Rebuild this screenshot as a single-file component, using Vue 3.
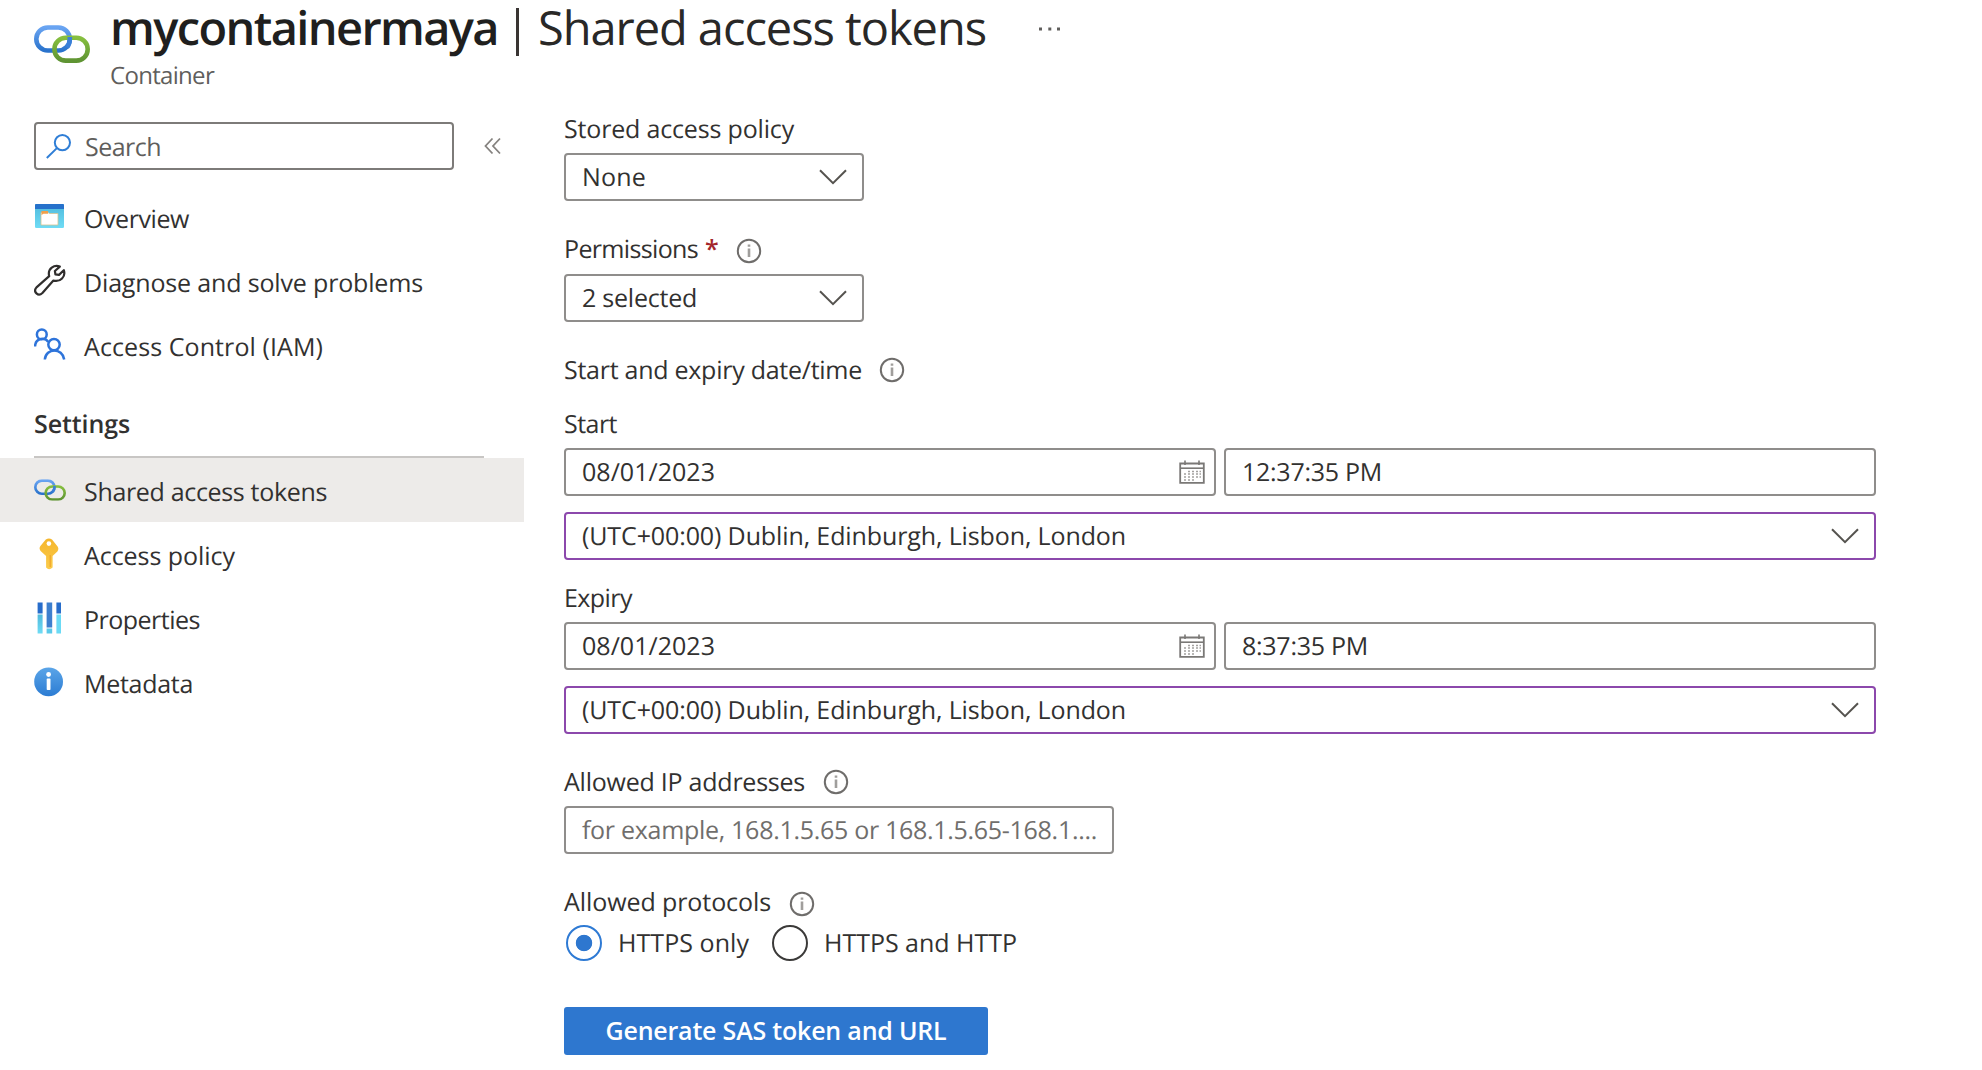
<script setup>
const navTop = [
  { icon: 'overview', label: 'Overview', width: 105 },
  { icon: 'wrench', label: 'Diagnose and solve problems', width: 339 },
  { icon: 'people', label: 'Access Control (IAM)', width: 239 },
]
const navSettings = [
  { icon: 'link', label: 'Shared access tokens', width: 243, active: true },
  { icon: 'key', label: 'Access policy', width: 151 },
  { icon: 'bars', label: 'Properties', width: 116 },
  { icon: 'info', label: 'Metadata', width: 109 },
]
const zone = '(UTC+00:00) Dublin, Edinburgh, Lisbon, London'
const periods = [
  { name: 'Start', width: 53, date: '08/01/2023', time: '12:37:35 PM', timeWidth: 140 },
  { name: 'Expiry', width: 68, date: '08/01/2023', time: '8:37:35 PM', timeWidth: 126 },
]

// Tracks a run of text so that it fills the given width in pixels.
const vFit = {
  mounted(el, { value }) {
    el.style.letterSpacing = '0'
    const natural = el.getBoundingClientRect().width
    el.style.letterSpacing = (value - natural) / el.textContent.length + 'px'
  },
}
</script>

<template>
  <div class="page">
    <svg width="0" height="0" class="defs">
      <defs>
        <linearGradient id="gBlue" x1="0" y1="0" x2="0" y2="1"><stop offset="0" stop-color="#69a4f2" /><stop offset="1" stop-color="#2a73cc" /></linearGradient>
        <linearGradient id="gGreen" x1="0" y1="0" x2="0" y2="1"><stop offset="0" stop-color="#86bf3f" /><stop offset="1" stop-color="#5f9433" /></linearGradient>
        <linearGradient id="gCyan" x1="0" y1="0" x2="0" y2="1"><stop offset="0" stop-color="#4fb9dc" /><stop offset="1" stop-color="#6fdcf5" /></linearGradient>
        <linearGradient id="gInfo" x1="0" y1="0" x2="0" y2="1"><stop offset="0" stop-color="#5ba5e8" /><stop offset="1" stop-color="#2c7cd3" /></linearGradient>
        <linearGradient id="gKey" x1="0" y1="0" x2="0" y2="1"><stop offset="0" stop-color="#f5b62c" /><stop offset="1" stop-color="#fbcb4b" /></linearGradient>
        <symbol id="chain" viewBox="0 0 56 38">
          <rect x="2.3" y="2.5" width="33.5" height="23" rx="11.5" fill="none" stroke="url(#gBlue)" stroke-width="4.6" />
          <rect x="20.4" y="12.8" width="33.3" height="22.8" rx="11.4" fill="none" stroke="url(#gGreen)" stroke-width="4.6" />
          <path d="M35.8 12 V14 Q35.8 19 33 22.3" fill="none" stroke="#3a7fd8" stroke-width="4.6" />
        </symbol>
      </defs>
    </svg>

    <header class="header">
      <svg class="logo" width="56" height="38"><use href="#chain" /></svg>
      <div class="heading">
        <h1 class="title">
          <span v-fit="388" class="name">mycontainermaya</span>
          <span class="bar"></span>
          <span v-fit="448" class="blade">Shared access tokens</span>
          <svg class="more" width="22" height="4" viewBox="0 0 22 4" fill="#605e5c"><rect x="0" y="0.5" width="3" height="3" /><rect x="9.3" y="0.5" width="3" height="3" /><rect x="18" y="0.5" width="3" height="3" /></svg>
        </h1>
        <div class="kind"><span v-fit="104">Container</span></div>
      </div>
    </header>

    <div class="body">
      <aside class="side">
        <div class="searchrow">
          <div class="search">
            <svg width="27" height="27" viewBox="0 0 27 27" fill="none" stroke="#2f7ed6" stroke-width="2"><circle cx="17.4" cy="9.6" r="7.6" /><path d="M11.9 15.1 L1.8 25" /></svg>
            <span v-fit="76">Search</span>
          </div>
          <svg class="collapse" width="18" height="18" viewBox="0 0 18 18" fill="none" stroke="#85827f" stroke-width="1.8"><path d="M8.5 1.5 L1.5 9 L8.5 16.5 M16 1.5 L9 9 L16 16.5" /></svg>
        </div>

        <template v-for="(group, gi) in [navTop, navSettings]" :key="gi">
          <div v-if="gi === 1" class="section"><span v-fit="96">Settings</span></div>
          <ul class="nav" :class="{ first: gi === 0 }">
            <li v-for="n in group" :key="n.label" :class="{ active: n.active }">
              <svg v-if="n.icon === 'overview'" class="ico" width="32" height="32" viewBox="0 0 32 32">
                <rect x="1" y="4" width="29" height="24" rx="1.2" fill="url(#gCyan)" /><path d="M1 9 V5.2 Q1 4 2.2 4 H28.8 Q30 4 30 5.2 V9 Z" fill="#2671cb" />
                <path d="M7 12.5 H14 L15.5 13.5 H24 V25 H7 Z" fill="#fff" stroke="#d6c391" stroke-width="0.8" /><path d="M7.5 11 H14 V13.8 H9.5 L7.5 15 Z" fill="#f0a04b" />
              </svg>
              <svg v-else-if="n.icon === 'wrench'" class="ico" width="32" height="32" viewBox="0 0 32 32" fill="none" stroke="#302e2d" stroke-width="2.2" stroke-linejoin="round">
                <path d="M25.8 2.6 C20.5 .5 13.2 4.3 15.2 12.2 L2.5 23.4 C-1.3 27.8 4.2 33 8.4 29 L19.4 16.6 C26.4 18.4 32 12.5 29.8 6.2 L25 10.9 L21.4 10.3 L20.9 7 Z" />
              </svg>
              <svg v-else-if="n.icon === 'people'" class="ico" width="32" height="32" viewBox="0 0 32 32" fill="none" stroke="#2e74da" stroke-width="2.5">
                <circle cx="7.8" cy="6.4" r="4.9" /><path d="M1 18.5 C1.5 9.5 11.5 9.2 14.2 14" /><circle cx="20" cy="16.6" r="5.7" /><path d="M10.8 31.5 C12 19.5 28.5 19.5 30.2 31.5" />
              </svg>
              <svg v-else-if="n.icon === 'link'" class="ico" width="32" height="22" viewBox="0 0 56 38"><use href="#chain" /></svg>
              <svg v-else-if="n.icon === 'key'" class="ico" width="32" height="32" viewBox="0 0 32 32">
                <path d="M11.8 1.6 Q15 -.8 18 1.6 L23.6 8.6 Q25.2 11 23.4 13.4 L18.6 18 V29.5 Q15 32.8 12.1 29.5 V18 L6.6 13 Q4.6 10.4 6.4 8 Z" fill="url(#gKey)" /><circle cx="14.9" cy="5.6" r="2.3" fill="#fff" /><path d="M16.2 17 V29" stroke="#f0a52a" stroke-width="1.2" />
              </svg>
              <svg v-else-if="n.icon === 'bars'" class="ico" width="32" height="32" viewBox="0 0 32 32">
                <rect x="3.6" y="0.5" width="5" height="11" fill="#276dcb" /><rect x="3.6" y="12.5" width="5" height="19" fill="url(#gCyan)" />
                <rect x="12.6" y="0.5" width="5.6" height="25" fill="#3d7fce" /><rect x="12.6" y="26.5" width="5.6" height="5" fill="#5bc9e9" />
                <rect x="22.4" y="0.5" width="4.6" height="11" fill="#276dcb" /><rect x="22.4" y="12.5" width="4.6" height="19" fill="#6bdaf5" />
              </svg>
              <svg v-else class="ico" width="32" height="32" viewBox="0 0 32 32">
                <circle cx="14.6" cy="15.8" r="14.4" fill="url(#gInfo)" /><circle cx="14.6" cy="8.5" r="2.4" fill="#fff" /><rect x="12.7" y="12.6" width="3.8" height="11.4" rx="0.8" fill="#fff" />
              </svg>
              <span v-fit="n.width">{{ n.label }}</span>
            </li>
          </ul>
        </template>
      </aside>

      <main class="main">
        <div class="label stored"><span v-fit="230">Stored access policy</span></div>
        <div class="box short first"><span v-fit="64">None</span>
          <svg width="28" height="16" viewBox="0 0 28 16" class="chev"><path d="M1 1.2 L14 14.2 L27 1.2" /></svg>
        </div>

        <div class="label permissions"><span v-fit="134">Permissions</span><span class="star">*</span>
          <svg class="tip low" width="26" height="26" viewBox="0 0 26 26"><circle cx="13" cy="13" r="11.2" /><path d="M13 10.6 V19 M13 6.6 V8.8" /></svg>
        </div>
        <div class="box short second"><span v-fit="115">2 selected</span>
          <svg width="28" height="16" viewBox="0 0 28 16" class="chev"><path d="M1 1.2 L14 14.2 L27 1.2" /></svg>
        </div>

        <div class="label range"><span v-fit="298">Start and expiry date/time</span>
          <svg class="tip" width="26" height="26" viewBox="0 0 26 26"><circle cx="13" cy="13" r="11.2" /><path d="M13 10.6 V19 M13 6.6 V8.8" /></svg>
        </div>

        <section v-for="p in periods" :key="p.name" class="period">
          <div class="label"><span v-fit="p.width">{{ p.name }}</span></div>
          <div class="pair">
            <div class="box"><span v-fit="133">{{ p.date }}</span>
              <svg class="cal" width="26" height="24" viewBox="0 0 26 24" fill="none" stroke="#7a7876">
                <path d="M1.2 3.5 H24.8 V22.8 H1.2 Z" stroke-width="1.8" /><path d="M1.2 8.2 H24.8" stroke-width="1.6" /><path d="M6 0.5 V5 M20 0.5 V5" stroke-width="1.6" />
                <path d="M5 14 H7 M5 17 H7 M5 20 H7 M9 11.5 H11 M9 14 H11 M9 17 H11 M9 20 H11 M13 11.5 H15 M13 14 H15 M13 17 H15 M13 20 H15 M17 11.5 H19 M17 14 H19 M17 17 H19 M20.5 11.5 H22 M20.5 14 H22 M20.5 17 H22" stroke-width="1.3" stroke="#a3a19f" />
              </svg>
            </div>
            <div class="box"><span v-fit="p.timeWidth">{{ p.time }}</span></div>
          </div>
          <div class="box zone"><span v-fit="544">{{ zone }}</span>
            <svg width="28" height="16" viewBox="0 0 28 16" class="chev"><path d="M1 1.2 L14 14.2 L27 1.2" /></svg>
          </div>
        </section>

        <div class="label ip"><span v-fit="241">Allowed IP addresses</span>
          <svg class="tip wide" width="26" height="26" viewBox="0 0 26 26"><circle cx="13" cy="13" r="11.2" /><path d="M13 10.6 V19 M13 6.6 V8.8" /></svg>
        </div>
        <div class="box address"><span v-fit="515">for example, 168.1.5.65 or 168.1.5.65-168.1....</span></div>

        <div class="label protocols"><span v-fit="207">Allowed protocols</span>
          <svg class="tip wide low" width="26" height="26" viewBox="0 0 26 26"><circle cx="13" cy="13" r="11.2" /><path d="M13 10.6 V19 M13 6.6 V8.8" /></svg>
        </div>
        <div class="radios">
          <i class="radio on"></i><span v-fit="131">HTTPS only</span>
          <i class="radio"></i><span v-fit="193">HTTPS and HTTP</span>
        </div>

        <button class="generate"><span v-fit="341">Generate SAS token and URL</span></button>
      </main>
    </div>
  </div>
</template>

<style>
body {
  margin: 0;
  background: #fff;
}
</style>

<style scoped>
.page {
  width: 1982px;
  height: 1070px;
  overflow: hidden;
  background: #fff;
  color: #323130;
  font-family: "Open Sans", "Noto Sans", sans-serif;
  font-size: 25px;
  white-space: nowrap;
  text-rendering: geometricPrecision;
}
.page * {
  box-sizing: border-box;
}
.defs {
  position: absolute;
}
svg {
  flex: none;
}
.header {
  display: flex;
  height: 111px;
  padding-left: 34px;
}
.logo {
  margin-top: 25px;
}
.heading {
  margin-left: 20px;
}
.title {
  display: flex;
  align-items: center;
  height: 54px;
  margin: 0;
  font-size: 47px;
  line-height: 54px;
  font-weight: 400;
  color: #292827;
}
.name {
  font-weight: 600;
  color: #201f1e;
}
.bar {
  width: 3px;
  height: 48px;
  margin: 10px 19px 0 18px;
  background: #3a3533;
}
.more {
  margin: 3px 0 0 53px;
}
.kind {
  margin-top: 8px;
  font-size: 24px;
  line-height: 28px;
  color: #605e5c;
}
.body {
  display: flex;
}
.side {
  width: 524px;
}
.searchrow {
  display: flex;
  align-items: center;
  padding: 11px 0 0 34px;
}
.search {
  display: flex;
  align-items: center;
  gap: 13px;
  width: 420px;
  height: 48px;
  padding-left: 9px;
  border: 2px solid #7d7b79;
  border-radius: 4px;
  color: #605e5c;
}
.search span {
  margin-top: 1px;
}
.collapse {
  margin-left: 30px;
}
.nav {
  list-style: none;
  margin: 0;
  padding: 0;
}
.nav.first {
  margin-top: 14px;
}
.nav li {
  display: flex;
  align-items: center;
  gap: 18px;
  height: 64px;
  padding-left: 34px;
}
.nav li span {
  margin-top: 4px;
}
.nav.first li span {
  margin-top: 5px;
}
.ico {
  margin-top: 0;
}
.section {
  height: 82px;
  width: 450px;
  margin-left: 34px;
  padding-top: 31px;
  border-bottom: 2px solid #c8c6c4;
  line-height: 34px;
  font-weight: 600;
}
.nav li.active {
  background: #edebe9;
}
.main {
  width: 1312px;
  margin-left: 40px;
}
.label {
  display: flex;
  align-items: center;
  height: 34px;
}
.stored {
  padding-top: 2px;
}
.permissions {
  margin-top: 31px;
}
.star {
  margin-left: 7px;
  color: #a4262c;
  font-weight: 600;
}
.tip {
  margin-left: 17px;
  fill: none;
  stroke: #6f6d6b;
  stroke-width: 2;
}
.tip.wide {
  margin-left: 18px;
}
.tip path {
  stroke: #a09e9c;
  stroke-width: 2.6;
}
.tip.low {
  margin-top: 3px;
}
.box {
  display: flex;
  align-items: center;
  justify-content: space-between;
  height: 48px;
  padding: 0 15px 0 16px;
  border: 2px solid #8f8d8b;
  border-radius: 4px;
}
.short {
  width: 300px;
}
.first.box {
  margin-top: 8px;
}
.second {
  margin-top: 8px;
}
.chev {
  fill: none;
  stroke: #55534f;
  stroke-width: 2;
}
.range {
  margin-top: 31px;
}
.period {
  margin-top: 20px;
}
.period + .period {
  margin-top: 21px;
}
.pair {
  display: grid;
  grid-template-columns: 1fr 1fr;
  gap: 8px;
  margin-top: 7px;
}
.pair .box {
  padding-right: 9px;
}
.zone {
  margin-top: 16px;
  border-color: #8c48ac;
}
.ip {
  margin-top: 31px;
}
.address {
  width: 550px;
  margin-top: 7px;
  color: #706e6c;
}
.protocols {
  margin-top: 31px;
}
.radios {
  display: flex;
  align-items: center;
  margin-top: 5px;
  height: 38px;
}
.radio {
  width: 36px;
  height: 36px;
  margin: 0 16px 0 2px;
  border: 2px solid #3b3a39;
  border-radius: 50%;
}
.radio.on {
  border-color: #2e7ad4;
  background: radial-gradient(circle, #2e77cf 7.8px, transparent 8.6px);
}
.radios span + .radio {
  margin-left: 23px;
}
.generate {
  display: block;
  width: 424px;
  height: 48px;
  margin-top: 45px;
  padding: 0 0 3px;
  border: 0;
  border-radius: 3px;
  background: #2e77cf;
  color: #fff;
  font: 600 25px/44px "Open Sans", "Noto Sans", sans-serif;
}
</style>
